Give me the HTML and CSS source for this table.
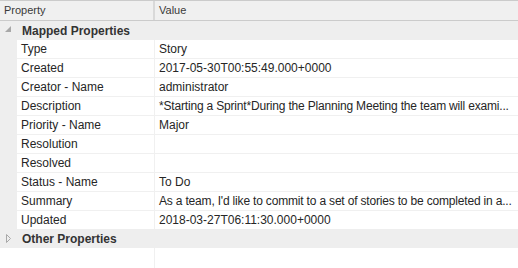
FILE: index.html
```html
<!DOCTYPE html>
<html>
<head>
<meta charset="utf-8">
<link rel="stylesheet" href="styles.css">
</head>
<body>
<div class="grid">
  <div class="header">
    <div class="hcell hcell-first">Property</div>
    <div class="hcell">Value</div>
  </div>
  <div class="group">
    <svg class="toggle" width="17" height="19" viewBox="0 0 17 19"><polygon points="11,5 11,11 5,11" fill="#a8a8a8"/></svg>
    <span class="group-title">Mapped Properties</span>
  </div>
  <div class="rows">
    <div class="row"><div class="gutter"></div><div class="name">Type</div><div class="value">Story</div></div>
    <div class="row"><div class="gutter"></div><div class="name">Created</div><div class="value">2017-05-30T00:55:49.000+0000</div></div>
    <div class="row"><div class="gutter"></div><div class="name">Creator - Name</div><div class="value">administrator</div></div>
    <div class="row"><div class="gutter"></div><div class="name">Description</div><div class="value value-long">*Starting a Sprint*During the Planning Meeting the team will exami...</div></div>
    <div class="row"><div class="gutter"></div><div class="name">Priority - Name</div><div class="value">Major</div></div>
    <div class="row"><div class="gutter"></div><div class="name">Resolution</div><div class="value"></div></div>
    <div class="row"><div class="gutter"></div><div class="name">Resolved</div><div class="value"></div></div>
    <div class="row"><div class="gutter"></div><div class="name">Status - Name</div><div class="value">To Do</div></div>
    <div class="row"><div class="gutter"></div><div class="name">Summary</div><div class="value value-long">As a team, I'd like to commit to a set of stories to be completed in a...</div></div>
    <div class="row"><div class="gutter"></div><div class="name">Updated</div><div class="value">2018-03-27T06:11:30.000+0000</div></div>
  </div>
  <div class="group">
    <svg class="toggle" width="17" height="19" viewBox="0 0 17 19"><polygon points="6.5,5.5 6.5,13.5 10.5,9.5" fill="none" stroke="#a8a8a8" stroke-width="1"/></svg>
    <span class="group-title">Other Properties</span>
  </div>
  <div class="filler">
    <div class="filler-left"></div>
    <div></div>
  </div>
</div>
</body>
</html>
```

FILE: styles.css
```css
html, body {
  margin: 0;
  padding: 0;
  background: #ffffff;
}

body {
  font-family: "Liberation Sans", Arial, sans-serif;
  font-size: 12px;
  color: #262626;
}

.grid {
  width: 518px;
  height: 268px;
  display: flex;
  flex-direction: column;
  overflow: hidden;
}

.header {
  display: grid;
  grid-template-columns: 155px 1fr;
  height: 19px;
  background: #f0f0f0;
  border-top: 1px solid #cbcbcb;
  border-bottom: 1px solid #cbcbcb;
}

.hcell {
  font-size: 11px;
  line-height: 19px;
  padding-left: 4px;
  color: #3a3a3a;
}

.hcell-first {
  border-right: 2px solid #d9d9d9;
}

.group {
  display: flex;
  align-items: center;
  height: 19px;
  background: #eeeeee;
}

.toggle {
  display: block;
  flex: 0 0 17px;
}

.group-title {
  font-weight: bold;
  font-size: 12px;
  padding-left: 5px;
  color: #333333;
}

.row {
  display: grid;
  grid-template-columns: 17px 138px 1fr;
  height: 19px;
}

.gutter {
  background: #eeeeee;
}

.name,
.value {
  line-height: 18px;
  border-bottom: 1px solid #f0f0f0;
  white-space: nowrap;
  overflow: hidden;
}

.name {
  padding-left: 4px;
  border-right: 1px solid #f0f0f0;
}

.value {
  padding-left: 4px;
}

.value-long {
  letter-spacing: -0.18px;
}

.row:last-child .name,
.row:last-child .value {
  border-bottom: none;
}

.row:last-child {
  height: 18px;
}

.filler {
  flex: 1;
  display: grid;
  grid-template-columns: 155px 1fr;
}

.filler-left {
  border-right: 1px solid #f0f0f0;
}
```
